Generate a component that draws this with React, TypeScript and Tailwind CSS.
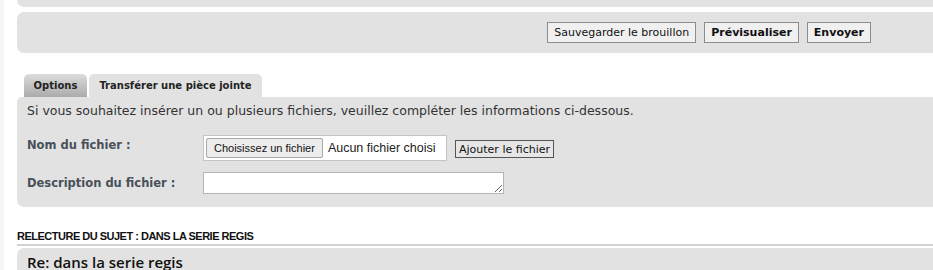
import React from 'react';

const verdana = { fontFamily: '"DejaVu Sans", Verdana, sans-serif' };
const arial = { fontFamily: '"Liberation Sans", Arial, sans-serif' };

function Btn({ children, bold }: { children: React.ReactNode; bold?: boolean }) {
  return (
    <button
      className={`h-[21px] px-[6px] border border-[#8c8c8c] bg-[#f0f0f0] text-[11px] leading-none text-[#111] ${bold ? 'font-bold' : 'font-normal'}`}
      style={verdana}
    >
      {children}
    </button>
  );
}

export default function App() {
  return (
    <div className="w-[933px] h-[270px] overflow-hidden bg-white flex" style={verdana}>
      <div className="w-[4px] shrink-0 bg-[#f6f6f6]" />
      <div className="flex-1 pl-[13px]">
        {/* top panel, cut by the window */}
        <div className="h-[7px] bg-[#e2e2e2] rounded-bl-[7px]" />

        {/* action bar */}
        <div className="mt-[5px] h-[41px] bg-[#e2e2e2] rounded-l-[7px] flex items-center justify-end gap-[8px] pr-[62px]">
          <Btn>Sauvegarder le brouillon</Btn>
          <Btn bold>Prévisualiser</Btn>
          <Btn bold>Envoyer</Btn>
        </div>

        {/* tabs */}
        <div className="mt-[21px] pl-[7px] flex items-end gap-[2px] h-[23px]">
          <div className="w-[63px] h-[23px] rounded-t-[5px] bg-gradient-to-b from-[#dcdcdc] to-[#ababab] flex items-center justify-center text-[10px] font-bold text-[#222]">
            Options
          </div>
          <div className="w-[173px] h-[23px] rounded-t-[5px] bg-[#e2e2e2] flex items-center justify-center text-[10px] font-bold text-[#222]">
            Transférer une pièce jointe
          </div>
        </div>

        {/* attachment panel */}
        <div className="h-[110px] bg-[#e2e2e2] rounded-l-[7px] rounded-tl-[5px] pl-[10px] pt-[6px]">
          <p className="text-[12.5px] leading-[16px] text-[#333]">
            Si vous souhaitez insérer un ou plusieurs fichiers, veuillez compléter les informations ci-dessous.
          </p>
          <div className="mt-[16px] flex items-start">
            <div className="w-[176px] pt-[2px] text-[11.5px] font-bold text-[#485058]">Nom du fichier :</div>
            <div className="h-[26px] w-[244px] bg-white border border-[#c4c4c4] flex items-center pl-[2px]">
              <div
                className="h-[20px] px-[7px] border border-[#a8a8a8] rounded-[2px] bg-[#ececec] flex items-center text-[11px] text-[#111]"
                style={arial}
              >
                Choisissez un fichier
              </div>
              <span className="ml-[5px] text-[12.5px] text-[#222] whitespace-nowrap" style={arial}>
                Aucun fichier choisi
              </span>
            </div>
            <button className="ml-[8px] mt-[5px] h-[18px] px-[3px] border border-[#555] bg-[#e6e6e6] text-[11px] leading-none text-[#111]" style={verdana}>
              Ajouter le fichier
            </button>
          </div>
          <div className="mt-[11px] flex items-start">
            <div className="w-[176px] pt-[3px] text-[11.5px] font-bold text-[#485058]">Description du fichier :</div>
            <textarea className="w-[301px] h-[22px] bg-white border border-[#b4b4b4] outline-none" />
          </div>
        </div>

        {/* review heading */}
        <div
          className="mt-[23px] h-[16px] border-b-2 border-[#d2d2d2] text-[11px] font-bold text-[#111] leading-[13px] tracking-[-0.5px]"
          style={arial}
        >
          RELECTURE DU SUJET : DANS LA SERIE REGIS
        </div>

        <div className="mt-[2px] h-[40px] bg-[#e2e2e2] rounded-tl-[7px] pl-[10px] pt-[3px]">
          <div className="text-[15px] font-semibold text-[#111]" style={{ fontFamily: '"Open Sans", "DejaVu Sans", sans-serif' }}>
            Re: dans la serie regis
          </div>
        </div>
      </div>
    </div>
  );
}
